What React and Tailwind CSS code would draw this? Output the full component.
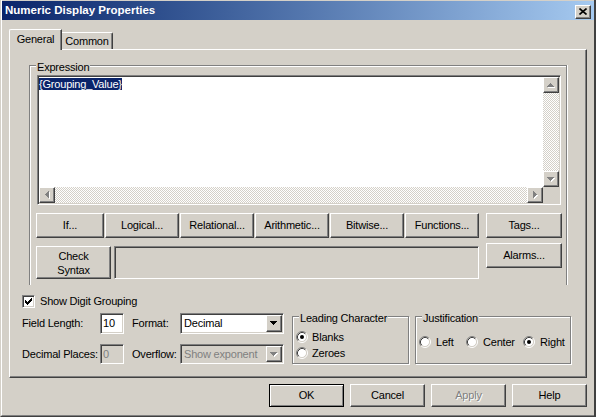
import React from 'react';

// classic win2k bevels
const raised =
  'border border-t-white border-l-white border-r-[#404040] border-b-[#404040] shadow-[inset_-1px_-1px_0_#808080]';
const sunken =
  'border border-t-[#808080] border-l-[#808080] border-r-white border-b-white shadow-[inset_1px_1px_0_#404040,inset_-1px_-1px_0_#d4d0c8]';
const etched = 'border border-[#808080] shadow-[inset_1px_1px_0_#fff,1px_1px_0_#fff]';

const Tri = ({ dir, color = '#000', disabled }) => {
  const rows = [0, 1, 2, 3];
  const horiz = dir === 'left' || dir === 'right';
  const w = horiz ? 4 : 7;
  const h = horiz ? 7 : 4;
  const rect = (i, dx, dy, fill) => {
    if (dir === 'up') return <rect key={`${fill}${i}`} x={3 - i + dx} y={i + dy} width={2 * i + 1} height={1} fill={fill} />;
    if (dir === 'down') return <rect key={`${fill}${i}`} x={i + dx} y={i + dy} width={7 - 2 * i} height={1} fill={fill} />;
    if (dir === 'left') return <rect key={`${fill}${i}`} x={i + dx} y={3 - i + dy} width={1} height={2 * i + 1} fill={fill} />;
    return <rect key={`${fill}${i}`} x={i + dx} y={i + dy} width={1} height={7 - 2 * i} fill={fill} />;
  };
  return (
    <svg width={w + 1} height={h + 1} shapeRendering="crispEdges">
      {disabled && rows.map((i) => rect(i, 1, 1, '#fff'))}
      {rows.map((i) => rect(i, 0, 0, disabled ? '#808080' : color))}
    </svg>
  );
};

const Btn = ({ className = '', children, disabled }) => (
  <div
    className={`flex items-center justify-center text-center ${raised} ${className} ${
      disabled ? 'text-[#808080] [text-shadow:1px_1px_0_#fff]' : 'text-black'
    }`}
  >
    {children}
  </div>
);

const ScrollBtn = ({ dir }) => (
  <div className={`w-[16px] h-[16px] shrink-0 flex items-center justify-center bg-[#d4d0c8] ${raised}`}>
    <Tri dir={dir} disabled />
  </div>
);

const Radio = ({ checked }) => (
  <svg width="12" height="12" className="shrink-0">
    <circle cx="6" cy="6" r="4.5" fill="#fff" />
    <path d="M2.11 9.89A5.5 5.5 0 0 1 9.89 2.11" stroke="#808080" fill="none" />
    <path d="M9.89 2.11A5.5 5.5 0 0 1 2.11 9.89" stroke="#fff" fill="none" />
    <path d="M2.82 9.18A4.5 4.5 0 0 1 9.18 2.82" stroke="#404040" fill="none" />
    <path d="M9.18 2.82A4.5 4.5 0 0 1 2.82 9.18" stroke="#d4d0c8" fill="none" />
    {checked && <circle cx="6" cy="6" r="2" fill="#000" />}
  </svg>
);

const CheckMark = () => (
  <svg width="7" height="7" shapeRendering="crispEdges">
    {[2, 3, 4, 3, 2, 1, 0].map((y, x) => (
      <rect key={x} x={x} y={y} width="1" height="3" fill="#000" />
    ))}
  </svg>
);

const GroupLabel = ({ children }) => (
  <div className="absolute left-[6px] top-[-5px] px-px bg-[#d4d0c8]">{children}</div>
);

export default function App() {
  return (
    <div className="w-[596px] h-[417px] bg-[#d4d0c8] border-l border-r-2 border-b border-l-[#d4d0c8] border-r-[#404040] border-b-[#404040] font-['Liberation_Sans',Arial,sans-serif] text-[11px] leading-[13px] tracking-[-0.2px] text-black select-none">
      <div className="h-full pt-px border-l border-b border-l-white border-b-[#808080]">
        {/* title bar */}
        <div className="h-[19px] flex items-center pl-[3px] bg-linear-to-r from-[#0a246a] to-[#a6caf0]">
          <span className="text-white font-bold text-[11.5px] tracking-normal">Numeric Display Properties</span>
          <div className={`ml-auto mr-[3px] mt-[2px] w-[16px] h-[14px] flex items-center justify-center bg-[#d4d0c8] ${raised}`}>
            <svg width="8" height="7">
              <path d="M0.5 0.5L7.5 6.5M7.5 0.5L0.5 6.5" stroke="#000" strokeWidth="1.6" />
            </svg>
          </div>
        </div>

        {/* tabs */}
        <div className="mt-[9px] ml-[7px] flex items-end h-[20px]">
          <div className="relative z-10 -mb-px w-[53px] h-[21px] pt-[3px] text-center bg-[#d4d0c8] border-t border-l border-r border-t-white border-l-white border-r-[#404040] rounded-tl-[2px] shadow-[inset_-1px_0_0_#808080]">
            General
          </div>
          <div className="w-[51px] h-[17px] pt-[2px] text-center border-t border-r border-t-white border-r-[#404040] rounded-tr-[2px] shadow-[inset_-1px_0_0_#808080]">
            Common
          </div>
        </div>

        {/* tab panel */}
        <div className="ml-[7px] w-[578px] h-[329px] border-t border-l border-r border-b border-t-white border-l-white border-r-[#404040] border-b-[#404040] shadow-[inset_-1px_-1px_0_#808080]">
          {/* Expression group */}
          <div className="relative mt-[15px] ml-[19px] w-[538px] h-[220px] border-t border-l border-r border-[#808080] shadow-[inset_1px_1px_0_#fff,1px_0_0_#fff] pt-[9px] pl-[6px]">
            <GroupLabel>Expression</GroupLabel>
            <div className={`ml-px w-[524px] h-[130px] p-px bg-white grid grid-cols-[1fr_16px] grid-rows-[1fr_16px] ${sunken}`}>
              <div className="pt-px">
                <span className="bg-[#0a246a] text-white">{'{Grouping_Value}'}</span>
              </div>
              <div className="flex flex-col">
                <ScrollBtn dir="up" />
                <div className="flex-1 bg-[repeating-conic-gradient(#fff_0_25%,#d4d0c8_0_50%)] bg-[length:2px_2px]" />
                <ScrollBtn dir="down" />
              </div>
              <div className="flex">
                <ScrollBtn dir="left" />
                <div className="flex-1 bg-[repeating-conic-gradient(#fff_0_25%,#d4d0c8_0_50%)] bg-[length:2px_2px]" />
                <ScrollBtn dir="right" />
              </div>
              <div className="bg-[#d4d0c8]" />
            </div>

            <div className="mt-[8px] flex">
              <div className="w-[443px]">
                <div className="flex gap-px h-[25px]">
                  <Btn className="w-[68px]">If...</Btn>
                  <Btn className="w-[74px]">Logical...</Btn>
                  <Btn className="w-[74px]">Relational...</Btn>
                  <Btn className="w-[74px]">Arithmetic...</Btn>
                  <Btn className="w-[74px]">Bitwise...</Btn>
                  <Btn className="w-[74px]">Functions...</Btn>
                </div>
                <div className="mt-[8px] flex gap-[3px] h-[33px]">
                  <Btn className="w-[75px] flex-col leading-[14px]">
                    <span>Check</span>
                    <span>Syntax</span>
                  </Btn>
                  <div className={`w-[365px] ${sunken}`} />
                </div>
              </div>
              <div className="ml-[7px] w-[76px]">
                <Btn className="h-[25px]">Tags...</Btn>
                <Btn className="mt-[5px] h-[25px]">Alarms...</Btn>
              </div>
            </div>
          </div>

          {/* lower options */}
          <div className="mt-[10px] ml-[12px] flex">
            <div className="w-[262px]">
              <div className="h-[13px] flex items-center gap-[5px]">
                <div className={`w-[13px] h-[13px] bg-white flex items-center justify-center ${sunken}`}>
                  <CheckMark />
                </div>
                <span>Show Digit Grouping</span>
              </div>

              <div className="mt-[5px] h-[21px] flex items-center">
                <span className="w-[78px]">Field Length:</span>
                <div className={`w-[24px] h-[21px] bg-white pl-[2px] flex items-center ${sunken}`}>10</div>
                <span className="ml-[8px] w-[48px]">Format:</span>
                <div className={`w-[104px] h-[21px] p-px bg-white flex ${sunken}`}>
                  <span className="flex-1 pl-[2px] flex items-center">Decimal</span>
                  <div className={`w-[16px] h-full flex items-center justify-center bg-[#d4d0c8] ${raised}`}>
                    <Tri dir="down" />
                  </div>
                </div>
              </div>

              <div className="mt-[10px] h-[20px] flex items-center">
                <span className="w-[78px]">Decimal Places:</span>
                <div className={`w-[24px] h-[20px] pl-[2px] flex items-center text-[#808080] ${sunken}`}>0</div>
                <span className="ml-[8px] w-[48px]">Overflow:</span>
                <div className={`w-[104px] h-[20px] p-px flex ${sunken}`}>
                  <span className="flex-1 pl-[2px] flex items-center text-[#808080]">Show exponent</span>
                  <div className={`w-[16px] h-full flex items-center justify-center bg-[#d4d0c8] ${raised}`}>
                    <Tri dir="down" disabled />
                  </div>
                </div>
              </div>
            </div>

            <div className={`relative ml-[8px] mt-[21px] w-[117px] h-[48px] pt-[14px] pl-[3px] ${etched}`}>
              <GroupLabel>Leading Character</GroupLabel>
              <div className="h-[12px] flex items-center gap-[4px]">
                <Radio checked />
                <span>Blanks</span>
              </div>
              <div className="mt-[4px] h-[12px] flex items-center gap-[4px]">
                <Radio />
                <span>Zeroes</span>
              </div>
            </div>

            <div className={`relative ml-[6px] mt-[21px] w-[156px] h-[48px] pt-[19px] pl-[3px] ${etched}`}>
              <GroupLabel>Justification</GroupLabel>
              <div className="flex h-[12px]">
                <div className="w-[47px] flex items-center gap-[5px]">
                  <Radio />
                  <span>Left</span>
                </div>
                <div className="w-[57px] flex items-center gap-[5px]">
                  <Radio />
                  <span>Center</span>
                </div>
                <div className="flex items-center gap-[5px]">
                  <Radio checked />
                  <span>Right</span>
                </div>
              </div>
            </div>
          </div>
        </div>

        {/* dialog buttons */}
        <div className="mt-[6px] ml-[7px] w-[578px] h-[23px] flex justify-end gap-[6px]">
          <div className="w-[75px] flex items-center justify-center border border-black shadow-[inset_1px_1px_0_#fff,inset_-1px_-1px_0_#808080]">
            OK
          </div>
          <Btn className="w-[75px]">Cancel</Btn>
          <Btn className="w-[75px]" disabled>Apply</Btn>
          <Btn className="w-[75px]">Help</Btn>
        </div>
      </div>
    </div>
  );
}
